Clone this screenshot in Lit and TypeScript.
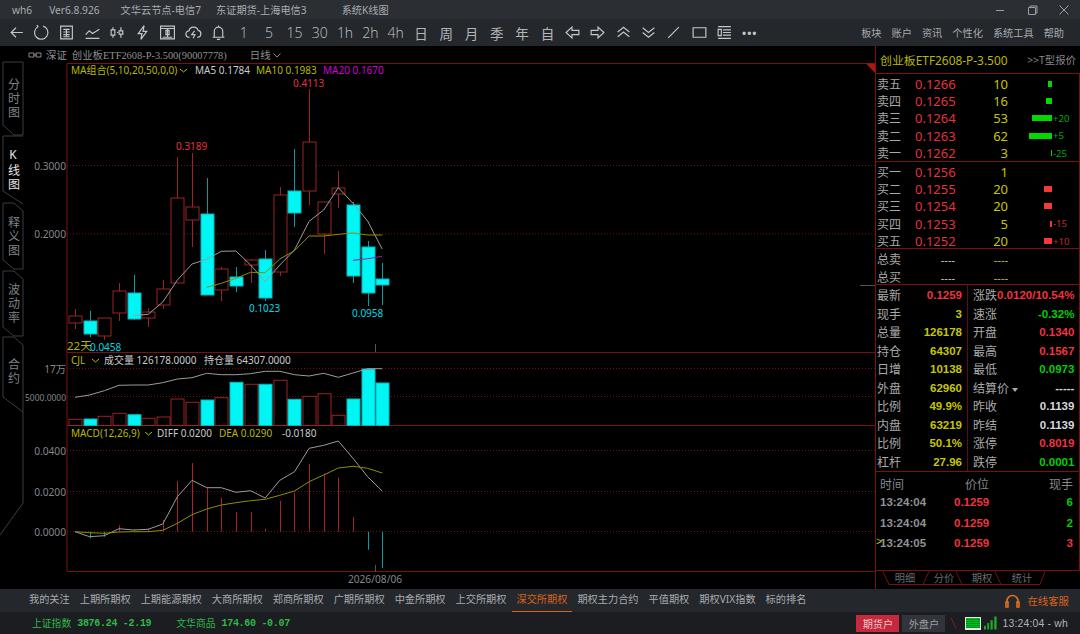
import { LitElement, css, html, svg } from "lit";
import { customElement } from "lit/decorators.js";

const RED = "#982424";
const CYAN = "#00f5f5";
const cx = (i: number) => 75 + 14.63 * i;

// open/close (body top, bottom) and wick (high, low) in screen px
const candles: [number, number, number, number, number][] = [
  [0, 316, 323, 309, 329],
  [1, 321, 334, 311, 337],
  [0, 318, 336, 318, 340],
  [0, 291, 313, 283, 321],
  [1, 293, 319, 275, 320],
  [0, 312, 318, 308, 327],
  [0, 289, 305, 280, 309],
  [0, 198, 283, 157, 283],
  [0, 207, 220, 153, 247],
  [1, 214, 295, 178, 295],
  [0, 269, 290, 267, 301],
  [1, 277, 286, 267, 292],
  [0, 260, 265, 259, 283],
  [1, 259, 298, 250, 301],
  [0, 195, 272, 187, 276],
  [1, 191, 213, 149, 227],
  [0, 142, 191, 89, 205],
  [0, 202, 234, 202, 254],
  [0, 188, 194, 171, 208],
  [1, 205, 276, 202, 283],
  [1, 247, 293, 241, 306],
  [1, 279, 285, 263, 305],
];

const ma5 = [315.7, 314.3, 302, 280, 264, 259.3, 251.3, 251, 265, 281.7, 265, 250, 221.3, 210, 187.7, 203.3, 221, 249];
const ma10 = [287.3, 283.3, 278.3, 272.3, 272.7, 259, 250.7, 236, 236, 234.3, 233, 235, 235];
const ma20 = [260.3, 258.7, 256.3];
const volTops = [419.3, 419, 416.3, 413.3, 414.7, 418.3, 417, 399, 402.3, 400, 397.7, 382.3, 384.3, 384.3, 380.3, 399.3, 396.3, 393.7, 415.3, 399, 369, 383];
const hold = [397.3, 395, 390.7, 385.3, 385, 385, 382.7, 379, 377.7, 373.3, 374.7, 374.7, 373.7, 371.3, 371.3, 374.7, 376, 373.3, 377.3, 373, 368.7, 368.7];
const diff = [531.7, 536.7, 535.7, 528.7, 530, 529.3, 524, 496.7, 480.3, 487.7, 487.7, 492.3, 490.7, 498, 480.3, 471.7, 448.3, 445.3, 441, 458.3, 476.7, 491];
const dea = [531.7, 532.7, 533.3, 532, 531.7, 531.7, 530.3, 523.3, 514.7, 509, 505, 502.7, 500.7, 499.3, 495.3, 491, 481.7, 475, 468, 466.3, 468.3, 473];
const macd = [531.7, 538.3, 536.7, 525.3, 529.3, 528.3, 520, 481, 463, 487.7, 497.7, 512, 512, 528.7, 501, 492.7, 464, 473.3, 477.3, 517, 549.7, 568];

const poly = (ys: number[], start = 0) => ys.map((y, i) => `${cx(i + start).toFixed(1)},${y}`).join(" ");

const toolIcons = [
  svg`<path d="M14 8H3M7.5 3.5L3 8l4.5 4.5"/>`,
  svg`<path d="M4.6 2.6A6.3 6.3 0 1 0 9.5 2M3.6 1l1.4 2"/>`,
  svg`<path d="M2.5 2h11v12h-11zM5 5h6M5 7.5h6M5 10h6M5 12h6M8 5v7"/>`,
  svg`<path d="M1.5 10L5 6.5 8 9l6.5-4M1.5 13.5h13"/>`,
  svg`<path d="M2 5.5h3.5v5H2zM3.7 3v2.5M3.7 10.5V13M9.5 6.5H13v3H9.5zM11.2 3v3.5M11.2 9.5V13M7.5 8h1"/>`,
  svg`<path d="M9.5 1.5L4 9h3.5L6.5 14.5 12 7H8.5z"/>`,
  svg`<path d="M1.5 2h13v12h-13zM1.5 4.2h13"/><path d="M6.5 6h3v4h-3zM8 4.5v8M3.5 12.5h9"/>`,
  svg`<path d="M4.5 12.5H4A3 3 0 0 1 3.7 6.5 4.5 4.5 0 0 1 12.4 6a3.3 3.3 0 0 1-.4 6.5h-.6"/><path d="M9 6.5L6.3 10h3l-1.6 3.5"/>`,
  svg`<path d="M8 1.5v1M4 12V7a4 4 0 0 1 8 0v5M2.5 12.5h11M6.5 14.5h3"/>`,
];
const toolText = ["1", "5", "15", "30", "1h", "2h", "4h", "日", "周", "月", "季", "年", "自"];
const toolIcons2 = [
  svg`<path d="M2 8l5.5-5v3H14v4H7.5v3z"/>`,
  svg`<path d="M14 8L8.5 3v3H2v4h6.5v3z"/>`,
  svg`<path d="M2.5 7.5L8 3l5.5 4.5M2.5 12L8 7.5l5.5 4.5"/>`,
  svg`<path d="M2.5 3.5L8 8l5.5-4.5M2.5 8L8 12.5 13.5 8"/>`,
  svg`<path d="M3 13L13 3"/>`,
  svg`<path d="M2 3.5h12v9H2z"/>`,
  svg`<path d="M2 2.5h12M6.5 5.5H14M6.5 8H14M6.5 10.5H14M2 13.5h12M2 5h3v6H2z"/>`,
];

const asks: [string, string, string, number, string][] = [
  ["卖五", "0.1266", "10", 4, ""],
  ["卖四", "0.1265", "16", 6, ""],
  ["卖三", "0.1264", "53", 20, "+20"],
  ["卖二", "0.1263", "62", 23, "+5"],
  ["卖一", "0.1262", "3", 1, "-25"],
];
const bids: [string, string, string, number, string][] = [
  ["买一", "0.1256", "1", 0, ""],
  ["买二", "0.1255", "20", 8, ""],
  ["买三", "0.1254", "20", 8, ""],
  ["买四", "0.1253", "5", 2, "-15"],
  ["买五", "0.1252", "20", 8, "+10"],
];

const stats: [string, string, string, string, string, string][] = [
  ["最新", "0.1259", "red", "涨跌", "0.0120/10.54%", "red"],
  ["现手", "3", "yel", "速涨", "-0.32%", "grn"],
  ["总量", "126178", "yel", "开盘", "0.1340", "red"],
  ["持仓", "64307", "yel", "最高", "0.1567", "red"],
  ["日增", "10138", "yel", "最低", "0.0973", "grn"],
  ["外盘", "62960", "yel", "结算价", "-----", "wht"],
  ["比例", "49.9%", "yel", "昨收", "0.1139", "wht"],
  ["内盘", "63219", "yel", "昨结", "0.1139", "wht"],
  ["比例", "50.1%", "yel", "涨停", "0.8019", "red"],
  ["杠杆", "27.96", "yel", "跌停", "0.0001", "grn"],
];

const trades: [string, string, string, string][] = [
  ["13:24:04", "0.1259", "6", "grn"],
  ["13:24:04", "0.1259", "2", "grn"],
  ["13:24:05", "0.1259", "3", "red"],
];

const markets = ["我的关注", "上期所期权", "上期能源期权", "大商所期权", "郑商所期权", "广期所期权", "中金所期权", "上交所期权", "深交所期权", "期权主力合约", "平值期权", "期权VIX指数", "标的排名"];

@customElement("app-root")
export class AppRoot extends LitElement {
  static styles = css`
    :host {
      display: block;
      width: 1080px;
      height: 634px;
      overflow: hidden;
      background: #000;
      font-family: "Noto Sans", "Noto Sans CJK SC", sans-serif;
      font-size: 10.2px;
      color: #a8abaf;
    }
    .title {
      height: 19px;
      display: flex;
      align-items: center;
      background: #2b2e33;
      padding-left: 12px;
      color: #a9acb0;
    }
    .title span:nth-child(2) { margin-left: 17px; }
    .title span:nth-child(3) { margin-left: 21px; }
    .title span:nth-child(4) { margin-left: 15px; }
    .title span:nth-child(5) { margin-left: 35px; }
    .win { margin-left: auto; display: flex; gap: 16px; padding-right: 8px; }
    .win svg { width: 16px; height: 12px; fill: none; stroke: #9a9da1; }
    .tools {
      height: 27px;
      display: flex;
      align-items: center;
      background: #24272b;
      padding-left: 3.5px;
    }
    .tool {
      width: 25.3px;
      height: 27px;
      flex: none;
      display: flex;
      align-items: center;
      justify-content: center;
      font-size: 13.5px;
      color: #b4b7ba;
    }
    .tool svg { width: 17px; height: 17px; fill: none; stroke: #c4c7ca; stroke-width: 1.1; }
    .num { font-family: "Open Sans", sans-serif; font-size: 14px; font-weight: 300; color: #c0c3c6; }
    .dots { letter-spacing: 1px; font-weight: 700; color: #c4c7ca; font-size: 11px; }
    .menu { margin-left: auto; display: flex; gap: 10px; padding-right: 16px; }
    .main { height: 543px; display: flex; }
    .side { width: 24px; flex: none; }
    .side svg { display: block; }
    .side path { fill: none; stroke: #3b3d40; }
    .side text {
      font-size: 12px;
      letter-spacing: 2px;
      fill: #7e8185;
      text-anchor: middle;
      writing-mode: vertical-rl;
      text-orientation: upright;
    }
    .side text.on { fill: #e6e6e6; }
    .chart { width: 851px; flex: none; display: flex; flex-direction: column; }
    .head {
      height: 17px;
      display: flex;
      align-items: center;
      padding-left: 4px;
      color: #8d9094;
      font-family: "Liberation Serif", "Noto Sans CJK SC", serif;
      font-size: 10.4px;
    }
    .head svg { width: 14px; height: 8px; fill: none; stroke: #888; }
    .head .mkt { margin-left: 4px; }
    .head .sym { margin-left: 5px; width: 178px; }
    .head .chev { width: 8px; height: 6px; margin-left: 2px; }
    .chart > svg { display: block; }
    .chart text { font-size: 10px; dominant-baseline: central; }
    .wht { color: #d6d8da; fill: #c8cacc; }
    .yel { color: #c6c600; fill: #b8b800; }
    .mag { fill: #d000d8; }
    .rt { fill: #e5323c; }
    .cy { fill: #00d8e0; }
    .chart text.big { font-size: 11.5px; }
    .chart text.ax { fill: #83868a; text-anchor: end; font-size: 10.2px; }
    .chart text.tiny { font-size: 9px; }
    .chart text.mid { text-anchor: middle; }
    .right {
      width: 205px;
      flex: none;
      border-left: 1px solid #7a1010;
      box-sizing: border-box;
    }
    .rhead {
      height: 27px;
      display: flex;
      align-items: center;
      padding: 0 4px;
      box-sizing: border-box;
    }
    .rname { color: #b8b800; font-size: 11.9px; }
    .rlink { margin-left: auto; font-size: 10.4px; color: #84878b; }
    .rbox { height: 498px; border: 1px solid #7a1010; border-left: none; box-sizing: border-box; }
    .sect { border-bottom: 1px solid #7a1010; box-sizing: border-box; }
    .asks, .bids { height: 87px; padding-top: 1px; }
    .asks { height: 88px; }
    .row {
      height: 17.4px;
      display: flex;
      align-items: center;
      padding-left: 1px;
      font-size: 12px;
    }
    .row .lb { width: 38px; color: #a9a9a9; flex: none; }
    .row .pr { width: 42px; color: #e5323c; font-size: 13px; flex: none; }
    .row .vol { width: 51px; text-align: right; color: #c6c600; font-size: 13px; flex: none; }
    .row .barw { width: 44px; flex: none; display: flex; justify-content: flex-end; }
    .bar { height: 6px; background: #00d800; }
    .bids .bar { background: #f33a3a; }
    .row .dl { margin-left: 1px; font-size: 9.6px; color: #00a800; }
    .bids .dl { color: #c02a2a; }
    .totals { height: 36px; padding-top: 1px; }
    .totals .row { height: 18px; }
    .totals .pr { color: #c8c8c8; text-align: right; width: 40px; font-size: 11px; }
    .totals .vol { font-size: 11px; width: 53px; }
    .stats {
      height: 187px;
      padding-top: 1px;
      display: grid;
      grid-template-columns: 91px 1fr;
      background: linear-gradient(#5a0e0e, #5a0e0e) 91px 0 / 1px 100% no-repeat;
    }
    .col { display: flex; flex-direction: column; }
    .col div {
      height: 18.5px;
      display: flex;
      align-items: center;
      justify-content: space-between;
      font-size: 12px;
      color: #a9a9a9;
      white-space: nowrap;
    }
    .col.a div { padding: 0 5px 0 1px; }
    .col.b div { padding: 0 6px 0 6px; }
    .col b { font: 700 11.5px "Liberation Sans", sans-serif; }
    .col .tri { display: inline-block; width: 0; height: 0; margin-left: 3px; border: 3px solid transparent; border-top: 4px solid #a9a9a9; border-bottom: none; vertical-align: middle; }
    .red { color: #f0333d; }
    .grn { color: #00d000; }
    .trades { padding: 2px 6px 0 4px; }
    .tr { display: grid; grid-template-columns: 74px 36px 1fr; height: 20.4px; align-items: center; font: 700 11.5px "Liberation Sans", sans-serif; color: #8f9296; position: relative; }
    .tr.th { font: 12px "Noto Sans CJK SC", sans-serif; height: 18px; color: #85888c; }
    .tr.th .p { margin-left: 11px; }
    .tr .q { text-align: right; }
    .tr .cur { position: absolute; left: -4px; top: 3px; color: #c6c600; font-weight: 400; font-size: 10px; }
    .rtabs { display: block; }
    .rtabs path { fill: none; stroke: #7a1010; }
    .rtabs text { font-size: 10.2px; fill: #696c70; text-anchor: middle; dominant-baseline: central; }
    .tabs {
      height: 23px;
      display: flex;
      align-items: stretch;
      background: #24272b;
      padding-left: 24px;
    }
    .tab { padding: 0 5px; line-height: 21px; color: #a8abaf; }
    .tab.on { color: #d8641c; border-bottom: 1px solid #d8641c; box-sizing: border-box; }
    .svc { margin-left: auto; display: flex; align-items: center; gap: 6px; padding-right: 11px; color: #d8641c; font-size: 10.4px; }
    .svc svg { width: 17px; height: 16px; fill: none; stroke: #e07020; stroke-width: 1.6; }
    .status {
      height: 22px;
      display: flex;
      align-items: center;
      background: #1b1d21;
      padding-left: 32px;
      color: #2eb84a;
      font-size: 9.8px;
    }
    .idx { display: flex; align-items: center; gap: 6px; }
    .idx + .idx { margin-left: 25px; }
    .idx b { font: 700 10px "Liberation Mono", monospace; letter-spacing: -0.3px; }
    .stat-r { margin-left: auto; display: flex; align-items: center; padding-right: 12px; color: #b0b3b6; font-size: 10.2px; }
    .btn { width: 43px; height: 17px; margin-right: 3px; display: flex; align-items: center; justify-content: center; background: #31343a; color: #9a9da1; }
    .btn.on { background: #c6283c; color: #e8c8cc; }
    .slash { width: 10px; height: 12px; margin: 0 6px 0 1px; fill: none; stroke: #8a1a1a; }
    .grid {
      width: 16px;
      height: 13px;
      border: 1px solid #e8e8e8;
      border-bottom-width: 2px;
      box-sizing: border-box;
      background: repeating-linear-gradient(#00c020 0 1px, #009018 1px 2px);
    }
    .sig { width: 13px; height: 14px; margin: 0 5px 0 3px; fill: #1fa82a; }
    .clock { font: 10.4px "Liberation Sans", sans-serif; letter-spacing: 0.2px; }
  `;

  renderMain() {
    return svg`
      <g stroke="#6b1212" stroke-dasharray="1 2">
        ${[165.5, 234, 368.5, 396.5, 450.5, 491.5, 531.5].map(
          (y) => svg`<line x1="67" x2="875" y1=${y} y2=${y}/>`
        )}
      </g>
      ${candles.map(([up, t, b, hi, lo], i) => {
        const x = Math.round(cx(i)) + 0.5;
        const c = up ? "#109aa0" : RED;
        return svg`
          <line x1=${x} x2=${x} y1=${hi} y2=${t} stroke=${c}/>
          <line x1=${x} x2=${x} y1=${b} y2=${lo} stroke=${c}/>
          <rect x=${x - 6.5} y=${t} width="13" height=${b - t} fill=${up ? CYAN : "#000"} stroke=${up ? "#00b8bc" : RED}/>`;
      })}
      <polyline points=${poly(ma5, 4)} fill="none" stroke="#9c9c9c"/>
      <polyline points=${poly(ma10, 9)} fill="none" stroke="#8f8f00"/>
      <polyline points=${poly(ma20, 19)} fill="none" stroke="#a020b0"/>
      <text x="71" y="70" class="yel">MA组合(5,10,20,50,0,0)</text>
      <path d="M180 69l3.5 3 3.5-3" fill="none" stroke="#b8b800"/>
      <text x="195" y="70" class="wht">MA5 0.1784</text>
      <text x="256" y="70" class="yel">MA10 0.1983</text>
      <text x="323" y="70" class="mag">MA20 0.1670</text>
      <text x="293" y="83" class="rt">0.4113</text>
      <text x="176" y="146" class="rt">0.3189</text>
      <text x="249" y="308" class="cy">0.1023</text>
      <text x="352" y="312.5" class="cy">0.0958</text>
      <text x="67" y="345" class="yel big">22天</text>
      <text x="90" y="347" class="cy">0.0458</text>
      <text x="66" y="165.5" class="ax">0.3000</text>
      <text x="66" y="234" class="ax">0.2000</text>
      <line x1="375.5" x2="375.5" y1="344" y2="352" stroke="#555"/>
      <line x1="860" x2="875" y1="285.5" y2="285.5" stroke="#555"/>`;
  }

  renderLower() {
    return svg`
      ${volTops.map((t, i) => {
        const up = candles[i][0];
        return svg`<rect x=${Math.round(cx(i)) - 6} y=${t} width="13" height=${425.5 - t} fill=${up ? CYAN : "#000"} stroke=${up ? "#00b8bc" : RED}/>`;
      })}
      <polyline points=${poly(hold)} fill="none" stroke="#9c9c9c"/>
      <text x="71" y="360" class="yel">CJL</text>
      <path d="M92 359l3.5 3 3.5-3" fill="none" stroke="#b8b800"/>
      <text x="104" y="360" class="wht">成交量 126178.0000</text>
      <text x="204" y="360" class="wht">持仓量 64307.0000</text>
      <text x="66" y="369" class="ax">17万</text>
      <text x="66" y="397" class="ax tiny" textLength="41" lengthAdjust="spacingAndGlyphs">5000.0000</text>
      ${macd.map((y, i) => {
        if (i === 0) return null;
        const x = Math.round(cx(i)) + 0.5;
        return svg`<line x1=${x} x2=${x} y1="531.7" y2=${y} stroke=${y > 531.7 ? "#109aa0" : "#a52424"}/>`;
      })}
      <polyline points=${poly(diff)} fill="none" stroke="#9c9c9c"/>
      <polyline points=${poly(dea)} fill="none" stroke="#8f8f00"/>
      <text x="71" y="432.7" class="yel">MACD(12,26,9)</text>
      <path d="M145 432l3.5 3 3.5-3" fill="none" stroke="#b8b800"/>
      <text x="157" y="432.7" class="wht">DIFF 0.0200</text>
      <text x="219" y="432.7" class="yel">DEA 0.0290</text>
      <text x="282" y="432.7" class="wht">-0.0180</text>
      <text x="66" y="451" class="ax">0.0400</text>
      <text x="66" y="491.5" class="ax">0.0200</text>
      <text x="66" y="532" class="ax">0.0000</text>
      <line x1="375.5" x2="375.5" y1="565" y2="572" stroke="#555"/>
      <text x="375" y="579" class="ax mid">2026/08/06</text>`;
  }

  renderBook(rows: [string, string, string, number, string][]) {
    return rows.map(
      ([lb, pr, vol, w, dl]) => html`<div class="row">
        <span class="lb">${lb}</span><span class="pr">${pr}</span><span class="vol">${vol}</span>
        <span class="barw"><i class="bar" style="width:${w}px"></i></span><span class="dl">${dl}</span>
      </div>`
    );
  }

  render() {
    return html`
      <div class="title">
        <span>wh6</span><span>Ver6.8.926</span><span>文华云节点-电信7</span><span>东证期货-上海电信3</span><span>系统K线图</span>
        <div class="win">
          <svg viewBox="0 0 16 12"><path d="M4 6.5h8"/></svg>
          <svg viewBox="0 0 16 12"><path d="M4.5 3.5h7v7h-7zM6 3.5V2h7v7h-1.5"/></svg>
          <svg viewBox="0 0 16 12"><path d="M3.5 1.5l9 9M12.5 1.5l-9 9"/></svg>
        </div>
      </div>
      <div class="tools">
        ${toolIcons.map((p) => html`<div class="tool"><svg viewBox="0 0 16 16">${p}</svg></div>`)}
        ${toolText.map((t, i) => html`<div class="tool ${i < 7 ? "num" : ""}">${t}</div>`)}
        ${toolIcons2.map((p) => html`<div class="tool"><svg viewBox="0 0 16 16">${p}</svg></div>`)}
        <div class="tool dots">•••</div>
        <div class="menu"><span>板块</span><span>账户</span><span>资讯</span><span>个性化</span><span>系统工具</span><span>帮助</span></div>
      </div>
      <div class="main">
        <div class="side">
          <svg width="24" height="543" viewBox="0 46 24 543">
            <path d="M3 62H23V135H14L3 125V62"/>
            <path d="M23 136H3V191L23 204"/>
            <path d="M3 203H14L23 211V269H14L3 260V203"/>
            <path d="M3 271H14L23 279V336H14L3 327V271"/>
            <path d="M14 337L23 345V503L0 535M3 337H14M3 337V397L23 412"/>
            <text x="13" y="99">分时图</text>
            <text x="13" y="169" class="on">K线图</text>
            <text x="13" y="237">释义图</text>
            <text x="13" y="304">波动率</text>
            <text x="13" y="372">合约</text>
          </svg>
        </div>
        <div class="chart">
          <div class="head">
            <svg viewBox="0 0 14 8"><path d="M1 2h5v4H1zM8 2h5v4H8zM5 4h4"/></svg>
            <span class="mkt">深证</span>
            <span class="sym">创业板ETF2608-P-3.500(90007778)</span>
            <span>日线</span>
            <svg class="chev" viewBox="0 0 8 6"><path d="M.5 1.5L4 5l3.5-3.5"/></svg>
          </div>
          <svg width="851" height="526" viewBox="24 63 851 526">
            <path d="M67 571.5V63.5H875M67 571.5H875M67 352.5H875M67 425.5H875" fill="none" stroke="#7a1010"/>
            <path d="M866 63.5H875V73z" fill="#b01414"/>
            ${this.renderMain()} ${this.renderLower()}
          </svg>
        </div>
        <div class="right">
          <div class="rhead"><span class="rname">创业板ETF2608-P-3.500</span><span class="rlink">&gt;&gt;T型报价</span></div>
          <div class="rbox">
            <div class="sect asks">${this.renderBook(asks)}</div>
            <div class="sect bids">${this.renderBook(bids)}</div>
            <div class="sect totals">
              <div class="row"><span class="lb">总卖</span><span class="pr">----</span><span class="vol">----</span></div>
              <div class="row"><span class="lb">总买</span><span class="pr">----</span><span class="vol">----</span></div>
            </div>
            <div class="sect stats">
              <div class="col a">${stats.map((s) => html`<div>${s[0]}<b class=${s[2]}>${s[1]}</b></div>`)}</div>
              <div class="col b">
                ${stats.map(
                  (s) => html`<div>
                    <span>${s[3]}${s[3] === "结算价" ? html`<i class="tri"></i>` : null}</span><b class=${s[5]}>${s[4]}</b>
                  </div>`
                )}
              </div>
            </div>
            <div class="trades">
              <div class="tr th"><span>时间</span><span class="p">价位</span><span class="q">现手</span></div>
              ${trades.map(
                (t, i) => html`<div class="tr">
                  ${i === 2 ? html`<i class="cur">&gt;</i>` : null}
                  <span>${t[0]}</span><span class="red">${t[1]}</span><span class="q ${t[3]}">${t[2]}</span>
                </div>`
              )}
            </div>
          </div>
          <svg class="rtabs" width="204" height="18" viewBox="876 571 204 18">
            <path d="M883 571.5L889 584.5H923L929 571.5M923 584.5H962L956 571.5M962 584.5H1001L995 571.5M1001 584.5H1040L1045 571.5"/>
            <text x="905" y="578">明细</text><text x="944" y="578">分价</text><text x="982" y="578">期权</text><text x="1022" y="578">统计</text>
          </svg>
        </div>
      </div>
      <div class="tabs">
        ${markets.map((m) => html`<div class="tab ${m === "深交所期权" ? "on" : ""}">${m}</div>`)}
        <div class="svc">
          <svg viewBox="0 0 17 16"><path d="M3 10V8a5.5 5.5 0 0 1 11 0v2"/><path d="M2 9h2v5H2zM13 9h2v5h-2z"/></svg>
          <span>在线客服</span>
        </div>
      </div>
      <div class="status">
        <div class="idx"><span>上证指数</span><b>3876.24 -2.19</b></div>
        <div class="idx"><span>文华商品</span><b>174.60 -0.07</b></div>
        <div class="stat-r">
          <div class="btn on">期货户</div>
          <div class="btn">外盘户</div>
          <svg class="slash" viewBox="0 0 10 12"><path d="M2 .5l5 11"/></svg>
          <div class="grid"></div>
          <svg class="sig" viewBox="0 0 14 14"><rect x="0" y="10" width="2" height="4"/><rect x="3.5" y="7" width="2" height="7"/><rect x="7" y="4" width="2.4" height="10"/><rect x="11" y="0" width="2.6" height="14"/></svg>
          <span class="clock">13:24:04 - wh</span>
        </div>
      </div>
    `;
  }
}
